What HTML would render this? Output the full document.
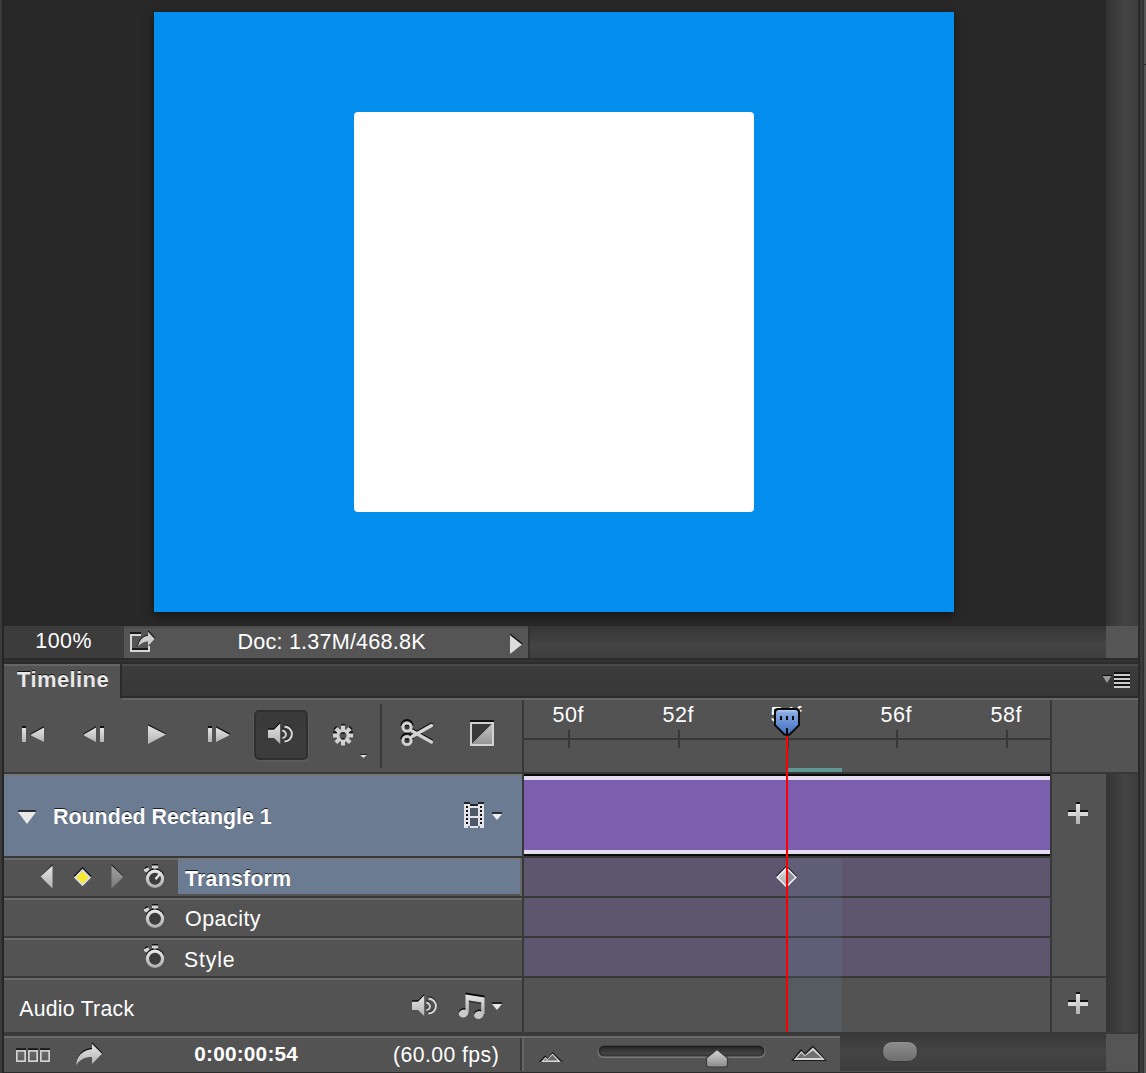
<!DOCTYPE html>
<html><head><meta charset="utf-8">
<style>
*{margin:0;padding:0;box-sizing:border-box}
html,body{width:1146px;height:1073px;overflow:hidden;background:#282828;position:relative;font-family:"Liberation Sans",sans-serif}
.a{position:absolute}
.t{position:absolute;line-height:1;white-space:pre;color:#fff;font-size:21.5px}
.b{font-weight:bold}
.sh{text-shadow:0 -1px 0 rgba(0,0,0,.75)}
svg{position:absolute;overflow:visible}
</style></head><body>

<!-- left strip -->
<div class="a" style="left:0;top:0;width:2px;height:1073px;background:#3b3b3b"></div>
<div class="a" style="left:2px;top:0;width:2px;height:1073px;background:#262626"></div>

<!-- canvas -->
<div class="a" style="left:154px;top:12px;width:800px;height:600px;background:#038eed;box-shadow:0 3px 9px rgba(0,0,0,.55)"></div>
<div class="a" style="left:354px;top:112px;width:400px;height:400px;background:#fff;border-radius:4px"></div>

<!-- right scrollbar (canvas) -->
<div class="a" style="left:1106px;top:0;width:32px;height:626px;background:linear-gradient(90deg,#333 0%,#3c3c3c 30%,#444 60%,#3e3e3e 100%)"></div>
<div class="a" style="left:1106px;top:626px;width:32px;height:32px;background:#555"></div>
<div class="a" style="left:1138px;top:0;width:2px;height:1073px;background:#2a2a2a"></div>
<div class="a" style="left:1140px;top:0;width:4px;height:1073px;background:#3a3a3a"></div>
<div class="a" style="left:1143px;top:0;width:1px;height:1073px;background:#2e2e2e"></div>
<div class="a" style="left:1144px;top:0;width:2px;height:1073px;background:#565656"></div>
<div class="a" style="left:1144px;top:64px;width:2px;height:1px;background:#262626"></div>

<!-- status bar -->
<div class="a" style="left:4px;top:626px;width:120px;height:32px;background:#3c3c3c"></div>
<div class="a" style="left:124px;top:626px;width:404px;height:32px;background:#555;border-top:2px solid #4a4a4a"></div>
<div class="a" style="left:528px;top:626px;width:578px;height:32px;background:linear-gradient(180deg,#353535,#444 60%,#3e3e3e);border-left:2px solid #333"></div>
<div class="t" style="left:35.3px;top:631px;font-size:21.4px;letter-spacing:0.5px">100%</div>
<div class="t" style="left:237.5px;top:631px;font-size:21.6px;letter-spacing:0.2px">Doc: 1.37M/468.8K</div>
<svg style="left:509px;top:634px" width="16" height="21"><path d="M1 1 L13 10.5 L1 20Z" fill="#ddd"/><path d="M1 -0.5 L13.8 9.6 L13 10.5 L1 1Z" fill="#111"/></svg>
<!-- share icon -->
<svg style="left:0;top:0" width="1146" height="1073" viewBox="0 0 1146 1073">
 <rect x="130" y="632" width="11" height="2" fill="#1a1a1a"/>
 <path d="M130 634 H141 V636 H132 V650 H148 V646 H150 V652 H130Z" fill="#d6d6d6"/>
 <rect x="132" y="648" width="16" height="2" fill="#1a1a1a"/>
 <path d="M137.5 647.5 C138.5 640.5 142 636 148 635.5 V631 L155 638.5 L148 646 V641.5 C143 641.5 140 644 137.5 647.5Z" fill="#cfcfcf"/>
 <path d="M148 630 L155.5 638 L154.6 638.8 L148 631.8Z" fill="#111"/>
 <path d="M137 647 C138 640.5 142 635.5 148 634.6 L148 635.8 C142.5 636.5 139 641 138 647Z" fill="#111" opacity=".8"/>
</svg>
<!-- panel separator -->
<div class="a" style="left:4px;top:658px;width:1134px;height:6px;background:#2b2b2b"></div>
<div class="a" style="left:4px;top:660px;width:1134px;height:2px;background:#333"></div>

<!-- tab bar -->
<div class="a" style="left:4px;top:664px;width:1134px;height:34px;background:linear-gradient(180deg,#3c3c3c,#373737);border-top:2px solid #4b4b4b"></div>
<div class="a" style="left:4px;top:664px;width:116px;height:36px;background:#535353;border-top:2px solid #656565"></div>
<div class="a" style="left:120px;top:664px;width:2px;height:34px;background:#2a2a2a"></div>
<div class="a" style="left:122px;top:696px;width:1016px;height:2px;background:#2a2a2a"></div>
<div class="t b sh" style="left:17px;top:669px;font-size:22px;color:#e8e8e8;letter-spacing:0.4px">Timeline</div>
<svg style="left:1102px;top:672px" width="30" height="17">
 <path d="M0 3 H10 L5 11Z" fill="#999"/><rect x="0" y="3" width="10" height="1" fill="#111"/>
 <rect x="12" y="0" width="16" height="16" fill="#111"/>
 <rect x="12" y="2" width="16" height="2" fill="#ccc"/>
 <rect x="12" y="6" width="16" height="2" fill="#ccc"/>
 <rect x="12" y="10" width="16" height="2" fill="#ccc"/>
 <rect x="12" y="14" width="16" height="2" fill="#ccc"/>
</svg>

<!-- panel body -->
<div class="a" id="panel" style="left:4px;top:698px;width:1134px;height:375px;background:#535353"></div>
<div class="a" style="left:122px;top:698px;width:1016px;height:2px;background:#666"></div>


<!-- ===== controls row ===== -->
<svg style="left:0;top:0" width="1146" height="1073" viewBox="0 0 1146 1073">
 <defs>
  <linearGradient id="ig" x1="0" y1="0" x2="0" y2="1"><stop offset="0" stop-color="#e4e4e4"/><stop offset="1" stop-color="#b4b4b4"/></linearGradient>
  <linearGradient id="igd" x1="0" y1="0" x2="0" y2="1"><stop offset="0" stop-color="#a8a8a8"/><stop offset="1" stop-color="#7c7c7c"/></linearGradient>
 </defs>
 <!-- first frame -->
 <rect x="22" y="726" width="4" height="2" fill="#111"/>
 <rect x="22" y="728" width="4" height="14" fill="url(#ig)"/>
 <path d="M30 734 L44 726 V728 L30 736Z" fill="#111"/>
 <path d="M30 735 L44 727.5 V742 Z" fill="url(#ig)"/>
 <!-- prev frame -->
 <path d="M83 734 L96 726 V728 L83 736Z" fill="#111"/>
 <path d="M83 735 L96 727.5 V742 Z" fill="url(#ig)"/>
 <rect x="100" y="726" width="4" height="2" fill="#111"/>
 <rect x="100" y="728" width="4" height="14" fill="url(#ig)"/>
 <!-- play -->
 <path d="M148 724 L166 733.5 L165 735 L148 726Z" fill="#111"/>
 <path d="M148 725.5 L166 734.5 L148 744Z" fill="url(#ig)"/>
 <!-- next frame -->
 <rect x="208" y="726" width="4" height="2" fill="#111"/>
 <rect x="208" y="728" width="4" height="14" fill="url(#ig)"/>
 <path d="M216 726 L230 733.5 V735.5 L216 728Z" fill="#111"/>
 <path d="M216 727.5 L230 735 L216 742Z" fill="url(#ig)"/>
</svg>
<!-- sound button -->
<div class="a" style="left:254px;top:710px;width:54px;height:50px;border-radius:5px;background:linear-gradient(180deg,#3a3a3a,#3c3c3c);border:2px solid #2f2f2f;box-shadow:0 1px 1px 1px rgba(105,105,105,.45)"></div>
<svg style="left:0;top:0" width="1146" height="1073" viewBox="0 0 1146 1073">
 <defs>
  <linearGradient id="ig2" x1="0" y1="0" x2="0" y2="1"><stop offset="0" stop-color="#e4e4e4"/><stop offset="1" stop-color="#b0b0b0"/></linearGradient>
 </defs>
 <!-- speaker in button -->
 <path d="M268 728.3 H274 L280.2 722 V724 L274 730 H268Z" fill="#0c0c0c"/>
 <path d="M268 729.7 H274 L280.2 723.6 V744 L274 738 H268Z" fill="url(#ig2)"/>
 <path d="M282.3 730.6 A3.6 3.6 0 0 1 282.3 737.8" stroke="#111" stroke-width="2.1" fill="none" transform="translate(0 -1)"/>
 <path d="M282.3 730.6 A3.6 3.6 0 0 1 282.3 737.8" stroke="#d4d4d4" stroke-width="2.1" fill="none"/>
 <path d="M284.5 726.6 A7.4 7.4 0 0 1 284.5 741.4" stroke="#111" stroke-width="2.1" fill="none" transform="translate(0 -1)"/>
 <path d="M284.5 726.6 A7.4 7.4 0 0 1 284.5 741.4" stroke="#d6d6d6" stroke-width="2.1" fill="none"/>
 <!-- gear -->
 <g transform="translate(343 735.5)">
  <g fill="#0c0c0c">
   <rect x="-2" y="-11.5" width="4" height="2"/>
   <rect x="-2" y="-11.5" width="4" height="2" transform="rotate(-45)"/>
   <rect x="-2" y="-11.5" width="4" height="2" transform="rotate(45)"/>
   <rect x="-10" y="-4" width="4" height="2"/><rect x="6" y="-4" width="4" height="2"/>
  </g>
  <circle r="5" fill="none" stroke="#cfcfcf" stroke-width="3"/>
  <g fill="#d2d2d2">
   <rect x="-2" y="-10" width="4" height="5"/><rect x="-2" y="5" width="4" height="5"/>
   <rect x="-10" y="-2" width="5" height="4"/><rect x="5" y="-2" width="5" height="4"/>
   <g transform="rotate(45)"><rect x="-2" y="-10" width="4" height="5"/><rect x="-2" y="5" width="4" height="5"/><rect x="-10" y="-2" width="5" height="4"/><rect x="5" y="-2" width="5" height="4"/></g>
  </g>
  <rect x="-1.8" y="-3" width="3.6" height="1.2" fill="#111"/>
  <rect x="-1.8" y="2.6" width="3.6" height="1.4" fill="#111"/>
 </g>
 <path d="M360 755 H367 L363.5 758Z" fill="#ddd"/><rect x="360" y="754" width="7" height="1" fill="#222"/>
 <rect x="380" y="704" width="2" height="64" fill="#3a3a3a"/>
 <!-- scissors -->
 <path d="M401.4 727 A5.6 5.6 0 0 1 412.6 727" stroke="#0c0c0c" stroke-width="2" fill="none" transform="translate(0 -1.3)"/>
 <path d="M401.4 740.5 A5.6 5.6 0 0 1 412.6 740.5" stroke="#0c0c0c" stroke-width="2" fill="none" transform="translate(0 -1.3)"/>
 <path d="M412 736.5 L431.5 725.5" stroke="#0c0c0c" stroke-width="3" stroke-linecap="round" transform="translate(0 -1.4)"/>
 <path d="M412 731 L431.5 742" stroke="#0c0c0c" stroke-width="3" stroke-linecap="round" transform="translate(0 -1.4)"/>
 <circle cx="407" cy="727" r="4.1" fill="#3c3c3c" stroke="#d4d4d4" stroke-width="3"/>
 <circle cx="407" cy="740.5" r="4.1" fill="#3c3c3c" stroke="#d0d0d0" stroke-width="3"/>
 <path d="M412 736.5 L431.5 725.5" stroke="#d6d6d6" stroke-width="3.2" stroke-linecap="round"/>
 <path d="M412 731 L431.5 742" stroke="#d2d2d2" stroke-width="3.2" stroke-linecap="round"/>
 <rect x="405" y="725" width="4" height="1.2" fill="#111"/>
 <rect x="405" y="738.5" width="4" height="1.2" fill="#111"/>
 <!-- transition -->
 <rect x="470" y="720" width="24" height="2" fill="#111"/>
 <rect x="470" y="722" width="24" height="24" fill="#d2d2d2"/>
 <path d="M472 724 H492 L472 744Z" fill="#3a3a3a"/>
 <defs><linearGradient id="tg" x1="0" y1="0" x2="0" y2="1"><stop offset="0" stop-color="#c4c4c4"/><stop offset="1" stop-color="#969696"/></linearGradient></defs>
 <path d="M492 724 V744 H472Z" fill="url(#tg)"/>
</svg>

<!-- vertical divider left/tracks -->
<div class="a" style="left:522px;top:700px;width:2px;height:332px;background:#383838"></div>

<!-- ruler -->
<div class="a" style="left:524px;top:738px;width:526px;height:2px;background:#383838"></div>
<div class="a" style="left:568px;top:730px;width:2px;height:18px;background:#383838"></div>
<div class="a" style="left:678px;top:730px;width:2px;height:18px;background:#383838"></div>
<div class="a" style="left:787px;top:730px;width:2px;height:18px;background:#383838"></div>
<div class="a" style="left:896px;top:730px;width:2px;height:18px;background:#383838"></div>
<div class="a" style="left:1006px;top:730px;width:2px;height:18px;background:#383838"></div>
<div class="t" style="left:552.5px;top:705px;letter-spacing:0.6px">50f</div>
<div class="t" style="left:662.5px;top:705px;letter-spacing:0.6px">52f</div>
<div class="t" style="left:770.5px;top:705px;letter-spacing:0.6px">54f</div>
<div class="t" style="left:880.5px;top:705px;letter-spacing:0.6px">56f</div>
<div class="t" style="left:990.5px;top:705px;letter-spacing:0.6px">58f</div>
<div class="a" style="left:1050px;top:700px;width:2px;height:332px;background:#383838"></div>
<div class="a" style="left:788px;top:768px;width:54px;height:4px;background:#5f9893"></div>

<!-- dark line under controls -->
<div class="a" style="left:4px;top:772px;width:1134px;height:2px;background:#383838"></div>

<!-- layer row -->
<div class="a" style="left:4px;top:774px;width:518px;height:2px;background:#777"></div>
<div class="a" style="left:4px;top:776px;width:518px;height:80px;background:#6b7b91"></div>
<div class="a" style="left:4px;top:856px;width:518px;height:2px;background:#383838"></div>
<div class="a" style="left:524px;top:774px;width:526px;height:2px;background:#080808"></div>
<div class="a" style="left:524px;top:776px;width:526px;height:4px;background:#e4dcef"></div>
<div class="a" style="left:524px;top:780px;width:526px;height:70px;background:#7c5fae"></div>
<div class="a" style="left:524px;top:850px;width:526px;height:4px;background:#e4dcef"></div>
<div class="a" style="left:524px;top:854px;width:526px;height:2px;background:#0a0a0a"></div>
<div class="a" style="left:524px;top:856px;width:526px;height:2px;background:#383838"></div>
<div class="t b sh" style="left:53px;top:807px;font-size:21.4px">Rounded Rectangle 1</div>

<!-- property rows left -->
<div class="a" style="left:4px;top:858px;width:518px;height:2px;background:#6a6a6a"></div>
<div class="a" style="left:178px;top:860px;width:342px;height:34px;background:#6b7b91"></div>
<div class="a" style="left:178px;top:858px;width:344px;height:2px;background:#77797c"></div>
<div class="a" style="left:520px;top:858px;width:2px;height:38px;background:#666"></div>
<div class="a" style="left:4px;top:896px;width:518px;height:2px;background:#383838"></div>
<div class="a" style="left:4px;top:898px;width:518px;height:2px;background:#6a6a6a"></div>
<div class="a" style="left:4px;top:936px;width:518px;height:2px;background:#383838"></div>
<div class="a" style="left:4px;top:938px;width:518px;height:2px;background:#6a6a6a"></div>
<div class="a" style="left:4px;top:976px;width:1102px;height:2px;background:#383838"></div>
<div class="a" style="left:4px;top:978px;width:518px;height:2px;background:#6a6a6a"></div>
<div class="t b sh" style="left:185px;top:868px;font-size:21.2px;letter-spacing:0.3px">Transform</div>
<div class="t" style="left:185px;top:909px;letter-spacing:0.45px">Opacity</div>
<div class="t" style="left:184px;top:948.5px;font-size:21.2px;letter-spacing:0.85px">Style</div>
<div class="t" style="left:19.3px;top:998px;font-size:21.2px;letter-spacing:0.28px">Audio Track</div>

<!-- property rows tracks -->
<div class="a" style="left:524px;top:858px;width:526px;height:38px;background:#5e566e"></div>
<div class="a" style="left:524px;top:896px;width:526px;height:2px;background:#383838"></div>
<div class="a" style="left:524px;top:898px;width:526px;height:38px;background:#5e566e"></div>
<div class="a" style="left:524px;top:936px;width:526px;height:2px;background:#383838"></div>
<div class="a" style="left:524px;top:938px;width:526px;height:38px;background:#5e566e"></div>
<!-- work area highlight -->
<div class="a" style="left:788px;top:858px;width:54px;height:174px;background:rgba(110,140,175,.15)"></div>

<!-- right column + scrollbar -->
<div class="a" style="left:1106px;top:774px;width:32px;height:260px;background:linear-gradient(90deg,#333 0%,#3c3c3c 30%,#444 60%,#3e3e3e 100%)"></div>

<!-- bottom bar -->
<div class="a" style="left:4px;top:1032px;width:1134px;height:4px;background:#3a3a3a"></div>
<div class="a" style="left:4px;top:1036px;width:836px;height:2px;background:#6a6a6a"></div>
<div class="a" style="left:4px;top:1038px;width:836px;height:34px;background:#535353"></div>
<div class="a" style="left:4px;top:1072px;width:1134px;height:1px;background:#2a2a2a"></div>
<div class="a" style="left:520px;top:1038px;width:2px;height:33px;background:#3a3a3a"></div>
<div class="a" style="left:522px;top:1038px;width:2px;height:33px;background:#666"></div>
<div class="a" style="left:840px;top:1032px;width:266px;height:39px;background:linear-gradient(180deg,#383838,#444 50%,#3e3e3e)"></div>
<div class="a" style="left:1106px;top:1034px;width:32px;height:37px;background:#555"></div>
<div class="a" style="left:882px;top:1041px;width:36px;height:21px;border-radius:10px;background:linear-gradient(180deg,#8e8e8e,#6e6e6e);border:1px solid #3a3a3a"></div>
<div class="t b" style="left:194.3px;top:1044px;font-size:20.8px;letter-spacing:0.2px">0:00:00:54</div>
<div class="t" style="left:393px;top:1044px;font-size:21.2px;letter-spacing:0.44px">(60.00 fps)</div>




<!-- ===== icons overlay ===== -->
<svg style="left:0;top:0" width="1146" height="1073" viewBox="0 0 1146 1073">
 <defs>
  <linearGradient id="g1" x1="0" y1="0" x2="0" y2="1"><stop offset="0" stop-color="#e6e6e6"/><stop offset="1" stop-color="#b2b2b2"/></linearGradient>
  <linearGradient id="g2" x1="0" y1="0" x2="0" y2="1"><stop offset="0" stop-color="#a0a0a0"/><stop offset="1" stop-color="#7a7a7a"/></linearGradient>
  <linearGradient id="ph" x1="0" y1="0" x2="0" y2="1"><stop offset="0" stop-color="#b4cdf2"/><stop offset=".12" stop-color="#86a8e0"/><stop offset="1" stop-color="#4270c2"/></linearGradient>
  <linearGradient id="kf" x1="0" y1="0" x2="1" y2="0"><stop offset="0" stop-color="#e8e8e8"/><stop offset=".5" stop-color="#c8c8c8"/><stop offset=".5" stop-color="#8a8a8a"/><stop offset="1" stop-color="#a0a0a0"/></linearGradient>
  <linearGradient id="th" x1="0" y1="0" x2="0" y2="1"><stop offset="0" stop-color="#d8d8d8"/><stop offset="1" stop-color="#8a8a8a"/></linearGradient>
 </defs>

 <!-- layer triangle -->
 <rect x="18" y="810" width="18" height="2" fill="#2a2f38"/>
 <path d="M18 812 H36 L27 824Z" fill="#e8e8e8"/>

 <!-- film icon -->
 <rect x="464" y="802" width="6" height="2" fill="#222"/>
 <rect x="478" y="802" width="6" height="2" fill="#222"/>
 <rect x="470" y="804" width="8" height="2" fill="#222"/>
 <rect x="464" y="804" width="6" height="24" fill="#e2e4e8"/><rect x="478" y="804" width="6" height="24" fill="#e2e4e8"/><rect x="470" y="806" width="8" height="22" fill="#e2e4e8"/>
 <rect x="470" y="808" width="8" height="8" fill="#4e596a"/>
 <rect x="470" y="818" width="8" height="8" fill="#4e596a"/>
 <g fill="#0e0e0e">
  <rect x="466" y="806" width="2" height="2"/><rect x="466" y="810" width="2" height="2"/><rect x="466" y="814" width="2" height="2"/><rect x="466" y="818" width="2" height="2"/><rect x="466" y="822" width="2" height="2"/>
  <rect x="480" y="806" width="2" height="2"/><rect x="480" y="810" width="2" height="2"/><rect x="480" y="814" width="2" height="2"/><rect x="480" y="818" width="2" height="2"/><rect x="480" y="822" width="2" height="2"/>
 </g>
 <rect x="468" y="826" width="2" height="2" fill="#6b7b91"/><rect x="478" y="826" width="2" height="2" fill="#6b7b91"/>
 <rect x="492" y="812" width="10" height="2" fill="#2a2f38"/>
 <path d="M492 814 H502 L497 820Z" fill="#eee"/>

 <!-- keyframe nav -->
 <path d="M40.5 876.5 L52.5 864 V866.5 L42 877.5Z" fill="#111"/>
 <path d="M40.5 876.5 L52.5 865.5 V888.5Z" fill="url(#g1)"/>
 <path d="M73.5 876 L82.5 867 L91.5 876 L82.5 885Z" fill="#0e0e0e"/>
 <path d="M73.8 877.5 L82.5 868.8 L91.2 877.5 L82.5 886.2Z" fill="#dcdce6"/>
 <path d="M76.2 877.5 L82.5 871.2 L88.8 877.5 L82.5 883.8Z" fill="#f8ea34"/>
 <path d="M111.5 864 L123.5 876 L122.5 877 L111.5 866.5Z" fill="#1a1a1a"/>
 <path d="M111.5 865.5 L123.5 876.8 L111.5 888.5Z" fill="url(#g2)"/>

 <!-- stopwatches -->
 <g id="sw1">
  <rect x="152" y="864" width="6" height="1.6" fill="#111"/>
  <rect x="152" y="865.6" width="6" height="2.4" fill="#d6d6d6"/>
  <rect x="153.6" y="867.5" width="2.8" height="3" fill="#c8c8c8"/>
  <path d="M146.5 875 A9.4 9.4 0 0 1 163.5 875" stroke="#111" stroke-width="1.6" fill="none"/>
  <circle cx="155" cy="878.7" r="7.6" fill="#3c3c3c" stroke="url(#g1)" stroke-width="3.2"/>
  <path d="M144 868.5 Q145.5 866.2 148 867 L149.5 869.5 L146.5 872.5 L144 871Z" fill="#d4d4d4"/>
  <path d="M144 868.5 Q145.5 865.6 148.5 866.6 L148 867.8 Q145.8 867.2 144.8 869.2Z" fill="#111"/>
 </g>
 <path d="M155.5 879.3 L160.3 873.6" stroke="#e4e4e4" stroke-width="2.4"/>
 <use href="#sw1" y="40"/>
 <use href="#sw1" y="80"/>

 <!-- plus signs -->
 <g id="plus">
  <rect x="1076" y="802" width="4" height="2" fill="#111"/>
  <rect x="1068" y="810" width="8" height="2" fill="#111"/>
  <rect x="1080" y="810" width="8" height="2" fill="#111"/>
  <rect x="1068" y="812" width="20" height="4" fill="#d8d8d8"/>
  <rect x="1076" y="804" width="4" height="20" fill="url(#g1)"/>
 </g>
 <use href="#plus" y="190"/>

 <!-- audio speaker -->
 <g transform="translate(144 272)">
 <path d="M268 728.3 H274 L280.2 722 V724 L274 730 H268Z" fill="#0c0c0c"/>
 <path d="M268 729.7 H274 L280.2 723.6 V744 L274 738 H268Z" fill="url(#g1)"/>
 <path d="M282.3 730.6 A3.6 3.6 0 0 1 282.3 737.8" stroke="#111" stroke-width="2.1" fill="none" transform="translate(0 -1)"/>
 <path d="M282.3 730.6 A3.6 3.6 0 0 1 282.3 737.8" stroke="#d4d4d4" stroke-width="2.1" fill="none"/>
 <path d="M284.5 726.6 A7.4 7.4 0 0 1 284.5 741.4" stroke="#111" stroke-width="2.1" fill="none" transform="translate(0 -1)"/>
 <path d="M284.5 726.6 A7.4 7.4 0 0 1 284.5 741.4" stroke="#d6d6d6" stroke-width="2.1" fill="none"/>
 </g>
 <!-- note -->
 <path d="M465.5 992.5 L484.5 995.5 V998 L465.5 995Z" fill="#0c0c0c"/>
 <ellipse cx="463.5" cy="1012" rx="4.8" ry="3.8" fill="#0c0c0c" transform="rotate(-15 463.5 1012)"/>
 <ellipse cx="478.8" cy="1013.5" rx="4.8" ry="3.8" fill="#0c0c0c" transform="rotate(-15 478.8 1013.5)"/>
 <path d="M465.5 994.5 L484.5 997.5 V1014 H481.2 V1002.5 L468.8 1000.5 V1012.5 H465.5Z" fill="url(#g1)"/>
 <ellipse cx="463.5" cy="1013.5" rx="4.8" ry="3.8" fill="#cacaca" transform="rotate(-15 463.5 1013.5)"/>
 <ellipse cx="478.8" cy="1015" rx="4.8" ry="3.8" fill="#c6c6c6" transform="rotate(-15 478.8 1015)"/>
 <path d="M468.8 1000.5 L481.2 1002.5 V1004 L468.8 1002Z" fill="#111" opacity=".5"/>
 <rect x="492" y="1002" width="10" height="2" fill="#222"/>
 <path d="M492 1004 H502 L497 1010Z" fill="#e6e6e6"/>

 <!-- bottom squares -->
 <defs><linearGradient id="sq" x1="0" y1="0" x2="0" y2="1"><stop offset="0" stop-color="#6c6c6c"/><stop offset="1" stop-color="#585858"/></linearGradient></defs>
 <g>
  <rect x="16" y="1048.3" width="10" height="1.7" fill="#141414"/>
  <rect x="28" y="1048.3" width="10" height="1.7" fill="#141414"/>
  <rect x="40" y="1048.3" width="10" height="1.7" fill="#141414"/>
  <rect x="16.85" y="1050.85" width="8.3" height="10.3" fill="url(#sq)" stroke="#d2d2d2" stroke-width="1.7"/>
  <rect x="28.85" y="1050.85" width="8.3" height="10.3" fill="url(#sq)" stroke="#d2d2d2" stroke-width="1.7"/>
  <rect x="40.85" y="1050.85" width="8.3" height="10.3" fill="url(#sq)" stroke="#d2d2d2" stroke-width="1.7"/>
 </g>
 <!-- bottom arrow -->
 <path d="M76 1065 C76.5 1055 83 1048.5 92 1047.8 V1049.5 C84 1050 78 1056 76.5 1065Z" fill="#111"/>
 <path d="M92 1042.3 L102.6 1053 L101.6 1053.8 L92 1044.2Z" fill="#111"/>
 <path d="M76 1065.5 C76.5 1056 83 1050 92 1049.3 V1044 L102 1053.8 L92 1064 V1057 C85 1057 79.5 1059.5 76 1065.5Z" fill="url(#g1)"/>
 <!-- small mountain -->
 <path d="M539 1062 L545 1055.5 L548 1058 L552.5 1052 L563 1062Z" fill="#1a1a1a"/>
 <path d="M541 1062 L545.5 1057 L547.5 1059 L552.5 1053.5 L561 1062Z" fill="#d8d8d8"/>
 <path d="M547 1060.5 L552.5 1055 L557.5 1060.5Z" fill="#6a6a6a"/>
 <path d="M543.5 1060.5 L545.5 1058.5 L547 1060.5Z" fill="#6a6a6a"/>
 <!-- slider -->
 <defs>
  <linearGradient id="tr1" x1="0" y1="0" x2="0" y2="1"><stop offset="0" stop-color="#1c1c1c"/><stop offset="1" stop-color="#3a3a3a"/></linearGradient>
  <linearGradient id="tr2" x1="0" y1="0" x2="0" y2="1"><stop offset="0" stop-color="#2c2c2c"/><stop offset="1" stop-color="#474747"/></linearGradient>
 </defs>
 <rect x="597.5" y="1045.5" width="168" height="12.5" rx="6.2" fill="#7a7a7a"/>
 <rect x="598.5" y="1045.5" width="166" height="11" rx="5.5" fill="url(#tr1)"/>
 <rect x="600.5" y="1047.5" width="162" height="7" rx="3.5" fill="url(#tr2)"/>
 <path d="M706.5 1058 L717 1049.5 L727.5 1058 V1064.5 Q727.5 1067 725 1067 H709 Q706.5 1067 706.5 1064.5Z" fill="url(#th)" stroke="#3a3a3a" stroke-width="1.2"/>
 <!-- big mountain -->
 <path d="M791 1061 L801 1049 L805 1053 L813 1045.5 L827 1061Z" fill="#1a1a1a"/>
 <path d="M793.5 1060 L801.5 1051 L805 1055 L813 1047.5 L825 1060Z" fill="#d6d6d6"/>
 <path d="M802 1058 L813 1050.5 L821.5 1058Z" fill="#707070"/>
 <path d="M796.5 1058 L801.5 1053 L804.5 1056 L802 1058Z" fill="#707070"/>

 <!-- keyframe on track -->
 <defs><linearGradient id="kl" x1="0" y1="0" x2="0" y2="1"><stop offset="0" stop-color="#dedede"/><stop offset="1" stop-color="#a6a6aa"/></linearGradient></defs>
 <path d="M776 876 L786.5 865.5 L797 876 L786.5 886.5Z" fill="#0c0c12"/>
 <path d="M776 877.3 L786.5 866.8 L797 877.3 L786.5 887.8Z" fill="#ececf2"/>
 <path d="M778.2 877.3 L786.5 869 L786.5 885.6Z" fill="url(#kl)"/>
 <path d="M794.8 877.3 L786.5 869 L786.5 885.6Z" fill="#8c8b98"/>
</svg>
<!-- playhead line on top -->
<div class="a" style="left:786px;top:735px;width:2px;height:297px;background:#f00"></div>
<svg style="left:0;top:0" width="1146" height="1073" viewBox="0 0 1146 1073">
 <path d="M778 708 H796 Q800 708 800 712 V725.5 L789.8 735.8 H784.2 L774 725.5 V712 Q774 708 778 708Z" fill="#0a0a0a"/>
 <path d="M779 710 H795 Q798 710 798 713 V724.7 L789 733.8 H785 L776 724.7 V713 Q776 710 779 710Z" fill="url(#ph)"/>
 <rect x="780" y="716" width="2" height="4" fill="#0a0a0a"/>
 <rect x="786" y="716" width="2" height="4" fill="#0a0a0a"/>
 <rect x="792" y="716" width="2" height="4" fill="#0a0a0a"/>
 <rect x="786" y="728" width="2" height="7" fill="#0a0a0a"/>
</svg>

</body></html>
